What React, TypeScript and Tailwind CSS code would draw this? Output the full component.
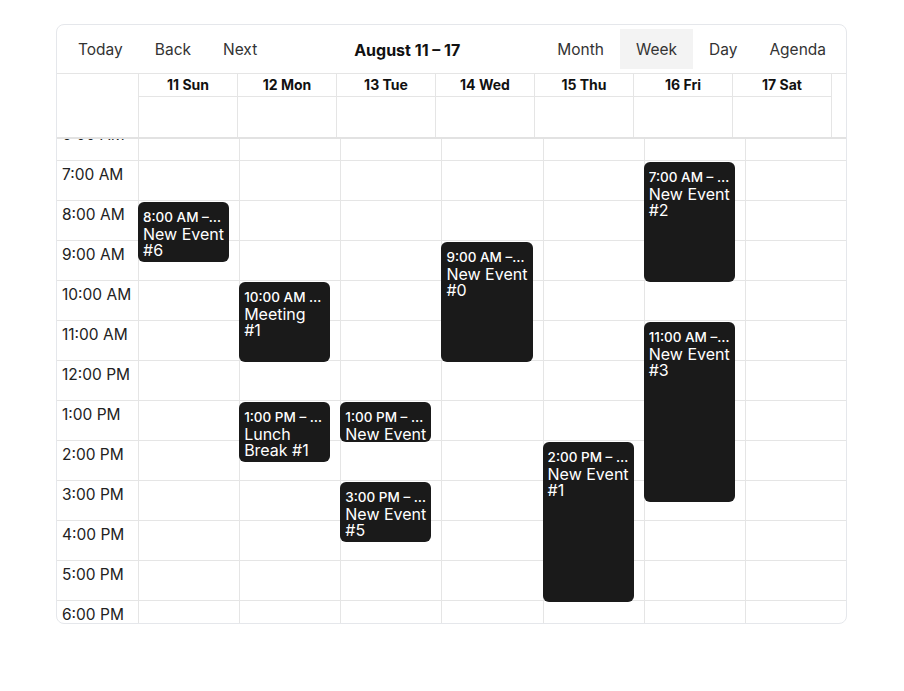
import React from "react";

type CalEvent = {
  day: number;
  start: number;
  end: number;
  time: string;
  title: string;
};

const days = ["11 Sun", "12 Mon", "13 Tue", "14 Wed", "15 Thu", "16 Fri", "17 Sat"];

const hours = [
  "6:00 AM",
  "7:00 AM",
  "8:00 AM",
  "9:00 AM",
  "10:00 AM",
  "11:00 AM",
  "12:00 PM",
  "1:00 PM",
  "2:00 PM",
  "3:00 PM",
  "4:00 PM",
  "5:00 PM",
  "6:00 PM",
];

const events: CalEvent[] = [
  { day: 0, start: 8, end: 9.5, time: "8:00 AM – 9:30 AM", title: "New Event #6" },
  { day: 1, start: 10, end: 12, time: "10:00 AM – 12:00 PM", title: "Meeting #1" },
  { day: 1, start: 13, end: 14.5, time: "1:00 PM – 2:30 PM", title: "Lunch Break #1" },
  { day: 2, start: 13, end: 14, time: "1:00 PM – 2:00 PM", title: "New Event #4" },
  { day: 2, start: 15, end: 16.5, time: "3:00 PM – 4:30 PM", title: "New Event #5" },
  { day: 3, start: 9, end: 12, time: "9:00 AM – 12:00 PM", title: "New Event #0" },
  { day: 4, start: 14, end: 18, time: "2:00 PM – 6:00 PM", title: "New Event #1" },
  { day: 5, start: 7, end: 10, time: "7:00 AM – 10:00 AM", title: "New Event #2" },
  { day: 5, start: 11, end: 15.5, time: "11:00 AM – 3:30 PM", title: "New Event #3" },
];

const HOUR = 40;
const FIRST = 6;

function ToolButton({ label, active }: { label: string; active?: boolean }) {
  return (
    <button
      className={`h-10 px-4 pt-[2px] text-[15.5px] text-[#333] ${active ? "bg-[#f3f3f3]" : ""}`}
    >
      {label}
    </button>
  );
}

function EventCard({ ev }: { ev: CalEvent }) {
  return (
    <div
      className="absolute left-[-1px] right-[10px] overflow-hidden rounded-[6px] bg-[#1a1a1a] px-[5px] pt-[7px] text-white"
      style={{ top: (ev.start - FIRST) * HOUR + 1, height: (ev.end - ev.start) * HOUR }}
    >
      <div className="overflow-hidden text-ellipsis whitespace-nowrap text-[13.5px] font-medium leading-[16px]">
        {ev.time}
      </div>
      <div className="mt-[1px] text-[16px] leading-[16px]">{ev.title}</div>
    </div>
  );
}

export default function App() {
  return (
    <div className="min-h-screen bg-white pl-[56px] pt-[24px] font-['Inter',sans-serif] text-[#222]">
      <div className="flex h-[600px] w-[791px] flex-col overflow-hidden rounded-lg border border-[#e5e7eb]">
        {/* toolbar */}
        <div className="flex h-[49px] shrink-0 items-center border-b border-[#e5e5e5] pl-[5px] pr-[4px]">
          <div className="flex">
            <ToolButton label="Today" />
            <ToolButton label="Back" />
            <ToolButton label="Next" />
          </div>
          <div className="flex-1 pt-[1px] text-center text-[16px] font-bold text-[#111]">August 11 – 17</div>
          <div className="flex">
            <ToolButton label="Month" />
            <ToolButton label="Week" active />
            <ToolButton label="Day" />
            <ToolButton label="Agenda" />
          </div>
        </div>

        {/* header */}
        <div className="flex shrink-0 border-b-2 border-[#e2e2e2]">
          <div className="w-[82px] shrink-0 border-r border-[#e5e5e5]" />
          {days.map((d) => (
            <div key={d} className="w-[99px] shrink-0 border-r border-[#e5e5e5]">
              <div className="h-[23px] border-b border-[#e5e5e5] text-center text-[14px] font-bold leading-[22px] text-[#111]">
                {d}
              </div>
              <div className="h-[40px]" />
            </div>
          ))}
        </div>

        {/* time grid */}
        <div className="flex-1 overflow-hidden">
          <div className="mt-[-18px] flex">
            <div className="w-[81px] shrink-0">
              {hours.map((h) => (
                <div
                  key={h}
                  className="h-[40px] whitespace-nowrap border-b border-[#e5e5e5] px-[5px] pt-[5px] text-[15.5px] leading-[18px] text-[#222]"
                >
                  {h}
                </div>
              ))}
            </div>
            {days.map((d, i) => (
              <div key={d} className="relative flex-1 border-l border-[#e5e5e5]">
                {hours.map((h) => (
                  <div key={h} className="h-[40px] border-b border-[#e5e5e5]" />
                ))}
                {events
                  .filter((ev) => ev.day === i)
                  .map((ev) => (
                    <EventCard key={ev.title} ev={ev} />
                  ))}
              </div>
            ))}
          </div>
        </div>
      </div>
    </div>
  );
}
